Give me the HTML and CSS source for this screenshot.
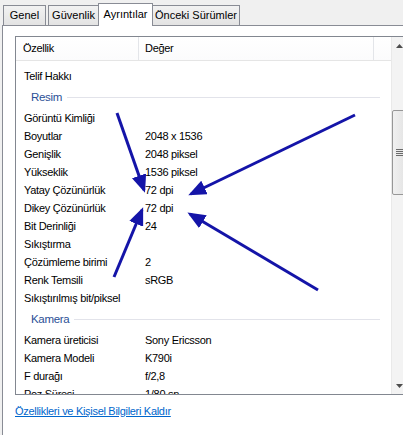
FILE: index.html
```html
<!DOCTYPE html>
<html>
<head>
<meta charset="utf-8">
<link rel="stylesheet" href="styles.css">
</head>
<body>
<div class="window">
  <div class="tabs">
    <div class="tab t1">Genel</div>
    <div class="tab t2">Güvenlik</div>
    <div class="tab active">Ayrıntılar</div>
    <div class="tab t4">Önceki Sürümler</div>
  </div>
  <div class="panel">
    <div class="list">
      <div class="content">
        <div class="header">
          <div class="hcell c1">Özellik</div>
          <div class="hcell c2">Değer</div>
          <div class="hcell c3"></div>
        </div>
        <div class="rows">
          <div class="row"><span class="name">Telif Hakkı</span><span class="val"></span></div>
          <div class="group"><span class="gtext">Resim</span><span class="gline"></span></div>
          <div class="row"><span class="name">Görüntü Kimliği</span><span class="val"></span></div>
          <div class="row"><span class="name">Boyutlar</span><span class="val">2048 x 1536</span></div>
          <div class="row"><span class="name">Genişlik</span><span class="val">2048 piksel</span></div>
          <div class="row"><span class="name">Yükseklik</span><span class="val">1536 piksel</span></div>
          <div class="row"><span class="name">Yatay Çözünürlük</span><span class="val">72 dpi</span></div>
          <div class="row"><span class="name">Dikey Çözünürlük</span><span class="val">72 dpi</span></div>
          <div class="row"><span class="name">Bit Derinliği</span><span class="val">24</span></div>
          <div class="row"><span class="name">Sıkıştırma</span><span class="val"></span></div>
          <div class="row"><span class="name">Çözümleme birimi</span><span class="val">2</span></div>
          <div class="row"><span class="name">Renk Temsili</span><span class="val">sRGB</span></div>
          <div class="row"><span class="name">Sıkıştırılmış bit/piksel</span><span class="val"></span></div>
          <div class="group"><span class="gtext">Kamera</span><span class="gline"></span></div>
          <div class="row"><span class="name">Kamera üreticisi</span><span class="val">Sony Ericsson</span></div>
          <div class="row"><span class="name">Kamera Modeli</span><span class="val">K790i</span></div>
          <div class="row"><span class="name">F durağı</span><span class="val">f/2,8</span></div>
          <div class="row"><span class="name">Poz Süresi</span><span class="val">1/80 sn.</span></div>
        </div>
      </div>
      <div class="scrollbar">
        <div class="sbtn up"><svg width="7" height="4" viewBox="0 0 7 4"><path d="M0 4 L3.5 0 L7 4 Z" fill="#4d4d4d"/></svg></div>
        <div class="track">
          <div class="thumb"><span class="grip"></span><span class="grip"></span><span class="grip"></span><span class="grip"></span></div>
        </div>
        <div class="sbtn down"><svg width="7" height="4" viewBox="0 0 7 4"><path d="M0 0 L3.5 4 L7 0 Z" fill="#4d4d4d"/></svg></div>
      </div>
    </div>
    <a class="link" href="#">Özellikleri ve Kişisel Bilgileri Kaldır</a>
  </div>
  <svg class="arrows" width="403" height="435" viewBox="0 0 403 435">
    <defs>
      <marker id="ah" markerWidth="6" markerHeight="5" refX="5" refY="2.5" orient="auto" markerUnits="strokeWidth">
        <path d="M0 0 L6 2.5 L0 5 Z" fill="#1414a8"/>
      </marker>
    </defs>
    <g stroke="#1414a8" stroke-width="3" fill="none" marker-end="url(#ah)">
      <line x1="117" y1="113" x2="144" y2="190"/>
      <line x1="355" y1="115" x2="191" y2="194"/>
      <line x1="318" y1="290" x2="190" y2="214"/>
      <line x1="114" y1="277" x2="142" y2="210"/>
    </g>
  </svg>
</div>
</body>
</html>
```
FILE: styles.css
```css
html, body {
  margin: 0;
  padding: 0;
}
body {
  font-family: "Liberation Sans", Arial, sans-serif;
  font-size: 11px;
  color: #000;
}
.window {
  position: relative;
  width: 403px;
  height: 435px;
  overflow: hidden;
  background: #f0f0f0;
}
.tabs {
  display: flex;
  align-items: flex-end;
  height: 25px;
  padding-left: 3px;
  box-sizing: border-box;
}
.tab {
  height: 20px;
  line-height: 19px;
  padding: 0;
  text-align: center;
  white-space: nowrap;
  box-sizing: border-box;
  border: 1px solid #898c95;
  border-bottom: none;
  background: linear-gradient(#f2f2f2, #e3e3e3);
  color: #000;
  flex: none;
}
.t1 { width: 43px; margin-right: 2px; }
.t2 { width: 51px; margin-right: -1px; }
.tab.active {
  width: 55px;
  height: 23px;
  line-height: 21px;
  background: #fff;
  position: relative;
  z-index: 2;
  margin-bottom: -1px;
  margin-right: -1px;
}
.t4 { width: 88px; }
.panel {
  margin-left: 2px;
  background: #fff;
  border-left: 1px solid #898c95;
  border-top: 1px solid #898c95;
  height: 420px;
  padding: 10px 0 0 12px;
  box-sizing: border-box;
  position: relative;
  letter-spacing: -0.3px;
}
.list {
  display: flex;
  width: 410px;
  height: 359px;
  border: 1px solid #828790;
  box-sizing: border-box;
  overflow: hidden;
}
.content {
  width: 375px;
  flex: none;
  overflow: hidden;
}
.header {
  display: flex;
  height: 24px;
  border-bottom: 1px solid #e5e5e5;
  box-sizing: border-box;
  background: linear-gradient(#ffffff, #fbfbfc);
}
.hcell {
  line-height: 23px;
  box-sizing: border-box;
}
.c1 { width: 123px; padding-left: 7px; border-right: 1px solid #e3e5e9; }
.c2 { width: 235px; padding-left: 6px; border-right: 1px solid #e3e5e9; }
.c3 { flex: 1; }
.rows { padding-top: 6px; }
.row {
  display: flex;
  height: 18px;
  line-height: 18px;
  white-space: nowrap;
}
.name { width: 121px; padding-left: 8px; flex: none; }
.val { flex: 1; }
.group {
  display: flex;
  align-items: center;
  height: 24px;
  padding-left: 15px;
  padding-right: 11px;
}
.gtext {
  color: #2b4f96;
  font-size: 11.5px;
}
.gline {
  flex: 1;
  height: 1px;
  background: #e2e3ea;
  margin-left: 5px;
  margin-top: 1px;
}
.scrollbar {
  width: 17px;
  flex: none;
  display: flex;
  flex-direction: column;
  background: #f3f3f3;
  border-left: 1px solid #e9e9e9;
  box-sizing: border-box;
}
.sbtn {
  height: 17px;
  display: flex;
  align-items: center;
  justify-content: center;
  padding-right: 2px;
}
.track {
  flex: 1;
  position: relative;
}
.thumb {
  position: absolute;
  left: 0;
  right: 0;
  top: 56px;
  height: 85px;
  border: 1px solid #979797;
  border-radius: 2px;
  background: linear-gradient(90deg, #f0f0f0, #e2e2e2);
  box-sizing: border-box;
  display: flex;
  flex-direction: column;
  justify-content: center;
  align-items: center;
  gap: 1px;
}
.grip {
  width: 7px;
  height: 1px;
  background: #6a6a6a;
  margin-right: 2px;
}
.link {
  display: inline-block;
  margin-top: 10px;
  color: #0066cc;
  text-decoration: underline;
  font-size: 11px;
}
.arrows {
  position: absolute;
  left: 0;
  top: 0;
  pointer-events: none;
}
```
